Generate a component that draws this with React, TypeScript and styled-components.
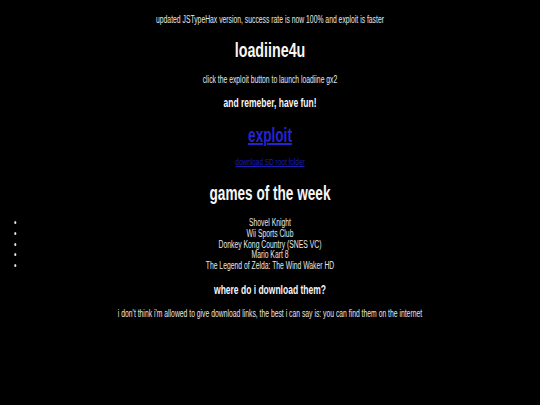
import React from 'react';
import styled, { createGlobalStyle } from 'styled-components';

const SX = 0.68;

const GlobalStyle = createGlobalStyle`
  html, body {
    margin: 0;
    padding: 0;
    background: #000;
    overflow: hidden;
  }
  body {
    width: 540px;
    height: 405px;
    font-family: 'Liberation Sans', Arial, sans-serif;
  }
`;

const Page = styled.div`
  width: ${540 / SX}px;
  height: 405px;
  transform: scaleX(${SX});
  transform-origin: 0 0;
  padding-top: 14px;
  box-sizing: border-box;
  text-align: center;
  color: #e8e8e8;
`;

const Text = styled.p<{ $top: number; $size?: number }>`
  margin: ${({ $top }) => $top}px 0 0;
  font-size: ${({ $size }) => $size ?? 10}px;
  line-height: 12px;
`;

const Heading = styled.div<{ $top: number; $size: number; $lh: number }>`
  margin-top: ${({ $top }) => $top}px;
  font-size: ${({ $size }) => $size}px;
  line-height: ${({ $lh }) => $lh}px;
  font-weight: bold;
  color: #f6f6f6;
`;

const BigLink = styled.a`
  display: block;
  margin-top: 14px;
  font-size: 20px;
  line-height: 22px;
  font-weight: bold;
  color: #2424d4;
  text-decoration: underline;
`;

const SmallLink = styled.a`
  display: block;
  margin-top: 10px;
  font-size: 9.5px;
  line-height: 12px;
  color: #1c1cb4;
  text-decoration: underline;
`;

const GameList = styled.ul`
  margin: 13px 0 0;
  padding: 0 34px;
  font-size: 10px;
  line-height: 10.8px;
`;

const Game = styled.li`
  list-style: disc outside;
`;

const games = [
  'Shovel Knight',
  'Wii Sports Club',
  'Donkey Kong Country (SNES VC)',
  'Mario Kart 8',
  'The Legend of Zelda: The Wind Waker HD',
];

export default function App() {
  return (
    <>
      <GlobalStyle />
      <Page>
        <Text $top={0}>updated JSTypeHax version, success rate is now 100% and exploit is faster</Text>
        <Heading $top={12} $size={21} $lh={24}>loadiine4u</Heading>
        <Text $top={12}>click the exploit button to launch loadiine gx2</Text>
        <Heading $top={10} $size={12.5} $lh={14}>and remeber, have fun!</Heading>
        <BigLink href="#">exploit</BigLink>
        <SmallLink href="#">download SD root folder</SmallLink>
        <Heading $top={13} $size={20} $lh={24}>games of the week</Heading>
        <GameList>
          {games.map((g) => (
            <Game key={g}>{g}</Game>
          ))}
        </GameList>
        <Heading $top={11} $size={12.5} $lh={14}>where do i download them?</Heading>
        <Text $top={11}>i don't think i'm allowed to give download links, the best i can say is: you can find them on the internet</Text>
      </Page>
    </>
  );
}
